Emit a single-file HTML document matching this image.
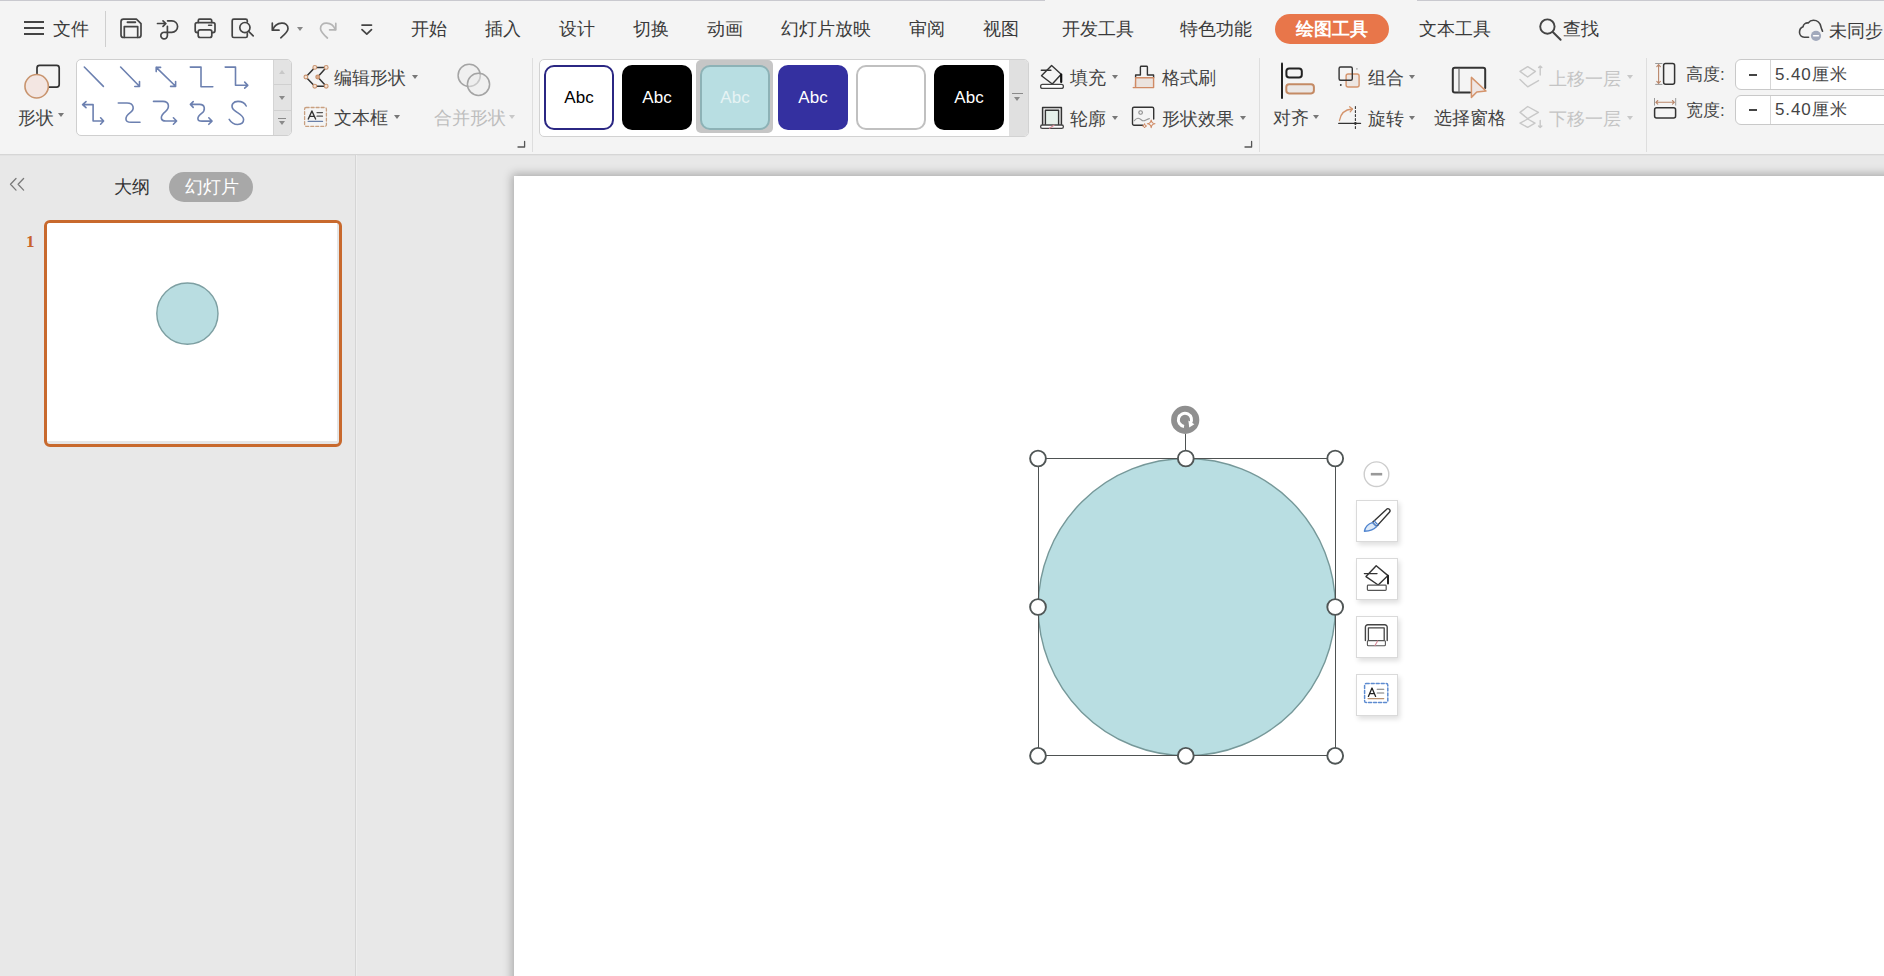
<!DOCTYPE html>
<html><head><meta charset="utf-8">
<style>
*{margin:0;padding:0;box-sizing:border-box}
html,body{width:1884px;height:976px;overflow:hidden;background:#e8e8e8;font-family:"Liberation Sans",sans-serif;color:#333}
.a{position:absolute}
.t{position:absolute;font-size:18px;line-height:20px;white-space:nowrap;color:#3a3a3a}
.dd{position:absolute;width:0;height:0;border-left:3.5px solid transparent;border-right:3.5px solid transparent;border-top:4px solid #777}
svg{position:absolute;overflow:visible}
#ribbon .t{color:#444}
.fb{position:absolute;left:1356px;width:41.5px;height:41.5px;background:#fff;border:1px solid #dadada;box-shadow:2px 3px 5px rgba(0,0,0,0.13)}
.sw{position:absolute;top:65px;width:70px;height:65px;border-radius:10px;font-size:17px;line-height:66px;text-align:center;font-family:"Liberation Sans",sans-serif}
.sw[style*="border"]{line-height:62px}
</style></head><body>
<!-- top bar -->
<div class="a" style="left:0;top:0;width:1884px;height:155px;background:#f4f4f4"></div>
<div class="a" style="left:0;top:0;width:1045px;height:1px;background:#c9c9cf"></div>
<div class="a" style="left:1417px;top:0;width:467px;height:1px;background:#c9c9cf"></div>
<div class="a" style="left:0;top:154px;width:1884px;height:1px;background:#d6d6d6"></div>
<div class="a" style="left:0;top:155px;width:1884px;height:1px;background:#e2e2e2"></div>

<!-- TABS -->
<div id="tabs">
<div class="a" style="left:24px;top:21px;width:20px;height:2px;background:#444"></div>
<div class="a" style="left:24px;top:27px;width:20px;height:2px;background:#444"></div>
<div class="a" style="left:24px;top:33px;width:20px;height:2px;background:#444"></div>
<span class="t" style="left:53px;top:19px">文件</span>
<div class="a" style="left:105px;top:11px;width:1px;height:36px;background:#cfcfcf"></div>
<span class="t" style="left:411px;top:19px">开始</span>
<span class="t" style="left:485px;top:19px">插入</span>
<span class="t" style="left:559px;top:19px">设计</span>
<span class="t" style="left:633px;top:19px">切换</span>
<span class="t" style="left:707px;top:19px">动画</span>
<span class="t" style="left:781px;top:19px">幻灯片放映</span>
<span class="t" style="left:909px;top:19px">审阅</span>
<span class="t" style="left:983px;top:19px">视图</span>
<span class="t" style="left:1062px;top:19px">开发工具</span>
<span class="t" style="left:1180px;top:19px">特色功能</span>
<div class="a" style="left:1275px;top:14px;width:114px;height:30px;border-radius:15px;background:#e8764a"></div>
<span class="t" style="left:1296px;top:19px;color:#fff;font-weight:bold">绘图工具</span>
<span class="t" style="left:1419px;top:19px">文本工具</span>
<span class="t" style="left:1563px;top:19px">查找</span>
<span class="t" style="left:1829px;top:21px">未同步</span>
<svg width="1884" height="60" style="left:0;top:0" fill="none" stroke="#444" stroke-width="1.7" stroke-linecap="round" stroke-linejoin="round">
 <!-- save -->
 <path d="M123.5 19.2 H136.4 L141 23.6 V35 A2.5 2.5 0 0 1 138.5 37.5 H123.5 A2.5 2.5 0 0 1 121 35 V21.7 A2.5 2.5 0 0 1 123.5 19.2 Z"/>
 <path d="M124.3 37.3 V26.6 H137.7 V37.3"/>
 <path d="M127.5 22.3 H135.3" stroke-width="1.9"/>
 <!-- share/loop -->
 <path d="M157.5 23.5 H165.5 M163 20.8 L165.9 23.5 L163 26.3"/>
 <path d="M167.6 20.8 H171.8 A5.8 5.8 0 0 1 171.8 32.4 H165 A3.3 3.3 0 1 0 167.4 35.6 V26.3"/>
 <!-- print -->
 <path d="M198.3 22.5 V20.5 A1.3 1.3 0 0 1 199.6 19.2 H210.4 A1.3 1.3 0 0 1 211.7 20.5 V22.5"/>
 <path d="M198 32.6 H197.2 A2 2 0 0 1 195.2 30.6 V24.6 A2 2 0 0 1 197.2 22.6 H213 A2 2 0 0 1 215 24.6 V30.6 A2 2 0 0 1 213 32.6 H212"/>
 <path d="M200.2 29.8 H209.8 A2 2 0 0 1 211.8 31.8 V35.5 A2 2 0 0 1 209.8 37.5 H200.2 A2 2 0 0 1 198.2 35.5 V31.8 A2 2 0 0 1 200.2 29.8 Z"/>
 <path d="M208.6 25.3 H211.6" stroke-width="1.6"/>
 <!-- preview -->
 <path d="M247.3 22 V20.8 A1.6 1.6 0 0 0 245.7 19.2 H233.8 A1.6 1.6 0 0 0 232.2 20.8 V35.9 A1.6 1.6 0 0 0 233.8 37.5 H245.7 A1.6 1.6 0 0 0 247.3 35.9 V33.4"/>
 <circle cx="244.9" cy="27.6" r="5.1"/>
 <path d="M248.6 31.4 L253.2 35.8"/>
 <!-- undo -->
 <path d="M272.3 23.2 V30.2 H279"/>
 <path d="M272.8 29.6 C276 21.6 288.2 20.8 288 28.8 C287.9 31.5 286 33.5 280.8 37.8"/>
 <!-- redo -->
 <path d="M335.8 23.4 V29.8 H329.6" stroke="#b5b5b5"/>
 <path d="M335.2 29.4 C332 21.6 320.4 20.8 320.5 28.8 C320.6 31.5 322.3 33.5 327.4 38" stroke="#b5b5b5"/>
 <!-- customize -->
 <path d="M362 25.1 H371.5 M362 29.6 L366.8 34.2 L371.5 29.6"/>
 <!-- search -->
 <circle cx="1547.4" cy="26.6" r="7.2" stroke-width="1.9"/>
 <path d="M1552.8 32 L1560.6 39.8" stroke-width="2"/>
 <!-- cloud -->
 <path d="M1808.6 37.2 H1804.2 C1801.4 37.2 1799.5 35 1799.5 32.3 C1799.5 29.6 1801 27.6 1803 26.8 C1803.4 24.4 1805.6 22.6 1808.2 22.9 C1809.5 21.2 1811.3 20.3 1813.4 20.3 C1817.4 20.3 1820.2 23.2 1820.9 26.6 C1821.3 28.4 1822 29.8 1822.5 31.2" stroke-width="1.6"/>
 <circle cx="1816" cy="35.8" r="5.1" fill="#a1a9bc" stroke="none"/>
 <path d="M1813.6 35.8 H1818.4" stroke="#fff" stroke-width="1.6"/>
</svg>
<div class="dd" style="left:297px;top:27px;border-top-color:#888"></div>
</div>


<!-- RIBBON -->
<div id="ribbon">
<!-- shape button -->
<span class="t" style="left:18px;top:108px">形状</span>
<div class="dd" style="left:58px;top:113px"></div>
<!-- line gallery -->
<div class="a" style="left:76px;top:59px;width:216px;height:77px;background:#fff;border:1px solid #cfcfcf;border-radius:5px"></div>
<div class="a" style="left:273px;top:60px;width:18px;height:75px;background:#e3e3e3;border-left:1px solid #d4d4d4;border-radius:0 4px 4px 0"></div>
<div class="a" style="left:274px;top:84px;width:17px;height:1px;background:#d0d0d0"></div>
<div class="a" style="left:274px;top:110px;width:17px;height:1px;background:#d0d0d0"></div>
<div class="dd" style="left:279px;top:70px;border-top:none;border-bottom:4px solid #c8c8c8"></div>
<div class="dd" style="left:279px;top:96px;border-top-color:#8a8a8a"></div>
<div class="a" style="left:278px;top:118px;width:8px;height:1px;background:#8a8a8a"></div>
<div class="dd" style="left:279px;top:121px;border-top-color:#8a8a8a"></div>
<!-- edit shape / textbox -->
<span class="t" style="left:334px;top:68px">编辑形状</span>
<div class="dd" style="left:412px;top:75px"></div>
<span class="t" style="left:334px;top:108px">文本框</span>
<div class="dd" style="left:394px;top:115px"></div>
<span class="t" style="left:434px;top:108px;color:#bdbdbd">合并形状</span>
<div class="dd" style="left:509px;top:115px;border-top-color:#c8c8c8"></div>
<div class="a" style="left:532px;top:58px;width:1px;height:94px;background:#dedede"></div>
<!-- style gallery -->
<div class="a" style="left:539px;top:59px;width:490px;height:78px;background:#fff;border:1px solid #d2d2d2;border-radius:5px"></div>
<div class="a" style="left:1009px;top:60px;width:19px;height:76px;background:#e0e0e0;border-radius:0 4px 4px 0"></div>
<div class="a" style="left:1012px;top:93px;width:11px;height:1px;background:#8a8a8a"></div>
<div class="dd" style="left:1014px;top:97px;border-top-color:#8a8a8a"></div>
<div class="a" style="left:696px;top:60px;width:77px;height:73px;background:#c6c6c6;border-radius:5px"></div>
<div class="sw" style="left:544px;background:#fff;border:2px solid #2b2783;color:#000">Abc</div>
<div class="sw" style="left:622px;background:#000;color:#fff">Abc</div>
<div class="sw" style="left:700px;background:#b8dee2;border:2px solid #8db2b6;color:#e6f3f4">Abc</div>
<div class="sw" style="left:778px;background:#3430a0;color:#fff">Abc</div>
<div class="sw" style="left:856px;background:#fff;border:2px solid #c0c0c0"></div>
<div class="sw" style="left:934px;background:#000;color:#fff">Abc</div>
<!-- fill etc -->
<span class="t" style="left:1070px;top:68px">填充</span>
<div class="dd" style="left:1112px;top:75px"></div>
<span class="t" style="left:1162px;top:68px">格式刷</span>
<span class="t" style="left:1070px;top:109px">轮廓</span>
<div class="dd" style="left:1112px;top:116px"></div>
<span class="t" style="left:1162px;top:109px">形状效果</span>
<div class="dd" style="left:1240px;top:116px"></div>
<div class="a" style="left:1259px;top:58px;width:1px;height:94px;background:#dedede"></div>
<!-- arrange -->
<span class="t" style="left:1273px;top:108px">对齐</span>
<div class="dd" style="left:1313px;top:115px"></div>
<span class="t" style="left:1368px;top:68px">组合</span>
<div class="dd" style="left:1409px;top:75px"></div>
<span class="t" style="left:1368px;top:109px">旋转</span>
<div class="dd" style="left:1409px;top:116px"></div>
<span class="t" style="left:1434px;top:108px">选择窗格</span>
<span class="t" style="left:1549px;top:69px;color:#c4c4c4">上移一层</span>
<div class="dd" style="left:1627px;top:75px;border-top-color:#c8c8c8"></div>
<span class="t" style="left:1549px;top:109px;color:#c4c4c4">下移一层</span>
<div class="dd" style="left:1627px;top:116px;border-top-color:#c8c8c8"></div>
<div class="a" style="left:1646px;top:58px;width:1px;height:94px;background:#dedede"></div>

<svg width="1884" height="155" style="left:0;top:0" fill="none" stroke-linecap="round" stroke-linejoin="round">
 <!-- shape icon -->
 <rect x="37" y="65.3" width="22.2" height="21.9" rx="2.6" stroke="#333" stroke-width="1.7"/>
 <circle cx="36.65" cy="86.25" r="11.7" fill="#f3e6e2" stroke="#c8946e" stroke-width="1.6"/>
 <!-- line gallery -->
 <g stroke="#6c80b0" stroke-width="1.6">
  <path d="M84.3 67 L103.4 86.4"/>
  <path d="M120.6 67 L139.4 86.2 M139.5 81.6 V86.5 H134.8"/>
  <path d="M156.2 67.4 L175.6 86.3 M156.2 71.6 V67.4 H160.6 M175.6 81.6 V86.4 H170.6"/>
  <path d="M190.3 67.1 H201 V86.8 H212.8"/>
  <path d="M225.2 67.1 H235.5 V85.3 H247.6 M244.7 82.1 L247.8 85.3 L244.7 88.2"/>
  <path d="M82.6 104.6 H93.1 V121 H103.3 M86 101.6 L82.6 104.6 L86 107.6 M100.6 117.8 L103.6 121 L100.6 124.2"/>
  <path d="M118.3 103 H127 C134.2 103 134.8 109.5 130.2 112.6 C124.6 116.6 124.2 122.3 131 122.3 H140"/>
  <path d="M153.5 101.4 H163 C169.6 101.4 169.8 108.2 165.4 111.6 C160 115.8 159.8 121 166 121 H176.5 M173.4 117.8 L176.6 121 L173.4 124.2"/>
  <path d="M190.5 104.4 H199.6 C205.4 104.4 205.6 110.5 201.6 113.4 C196.6 117.2 196.6 121.1 202 121.1 H211.8 M193.2 101.6 L190.4 104.4 L193.2 107.4 M208.8 117.8 L212 121.1 L208.8 124.3"/>
  <path d="M246.2 106 C244.6 102.8 241.4 101.4 238 101.4 C233.4 101.4 230.8 104.6 232.6 108.4 C234.6 112.4 243.6 114.2 243.6 119.6 C243.6 123 240.8 124.5 237.6 124.5 C234 124.5 231 122.4 229.2 119.4"/>
 </g>
 <!-- edit shape -->
 <path d="M314.8 67.4 H326.2 L317.7 77 L326.2 86.2 H314.8 L305.9 77 Z" stroke="#333" stroke-width="1.5"/>
 <g fill="#f4e2d4" stroke="#c99470" stroke-width="1.1">
  <circle cx="314.8" cy="67.4" r="1.9"/><circle cx="326.2" cy="67.4" r="1.9"/><circle cx="317.7" cy="77" r="1.9" fill="#d9a888"/>
  <circle cx="326.2" cy="86.2" r="1.9"/><circle cx="314.8" cy="86.2" r="1.9"/><circle cx="305.9" cy="77" r="1.9"/>
 </g>
 <!-- textbox -->
 <rect x="304.6" y="107.5" width="21.8" height="18.8" rx="1.5" stroke="#c9a080" stroke-width="1.3" stroke-dasharray="3 2"/>
 <path d="M308.3 119 L311.9 111 L315.6 119 M309.6 116.4 H314.3" stroke="#333" stroke-width="1.4"/>
 <path d="M317 112.6 H322.5 M317 116.2 H322.5" stroke="#555" stroke-width="1.2"/>
 <path d="M308.2 121.4 H322.5" stroke="#6a80a8" stroke-width="1.3"/>
 <!-- merge -->
 <circle cx="469.2" cy="75.4" r="11.1" stroke="#a4a4a4" stroke-width="1.5" fill="#ececec" fill-opacity="0.5"/>
 <circle cx="478.5" cy="84.3" r="11.1" stroke="#a4a4a4" stroke-width="1.5" fill="#ececec" fill-opacity="0.5"/>
 <path d="M518 147 H524.6 V141.4" stroke="#555" stroke-width="1.3"/>
 <!-- style gallery scroll nothing -->
 <!-- fill -->
 <path d="M1051.6 65.5 L1061.2 74.2 L1052.3 84 L1041.5 75.8 Z" stroke="#333" stroke-width="1.4"/>
 <path d="M1041.3 70.3 H1050.9" stroke="#333" stroke-width="1.4"/>
 <path d="M1061.2 74.5 V82" stroke="#111" stroke-width="2.2"/>
 <rect x="1040.6" y="84.4" width="22.8" height="4" rx="2" stroke="#444" stroke-width="1.3" fill="#fff"/>
 <!-- format painter -->
 <path d="M1135.6 77.8 V75 H1140.4 V67 A0.8 0.8 0 0 1 1141.2 66.3 H1146.6 A0.8 0.8 0 0 1 1147.4 67 V75 H1153.6 V77.8" stroke="#333" stroke-width="1.4"/>
 <path d="M1135.6 77.8 H1153.6 V87.6 H1133.2 M1135.6 77.8 V87.6" stroke="#d08a64" stroke-width="1.4" fill="#ebe3de"/>
 <!-- outline -->
 <path d="M1042.6 125 V107.4 H1061.4 V125" stroke="#333" stroke-width="1.5"/>
 <path d="M1045.4 125 V110.3 H1058.6 V125" stroke="#333" stroke-width="1.4" fill="#e6f0ea"/>
 <rect x="1040.6" y="125" width="22.8" height="3.4" rx="1.7" stroke="#444" stroke-width="1.3" fill="#fff"/>
 <path d="M1049.5 128.2 L1054 125.2" stroke="#d88a98" stroke-width="1.2"/>
 <!-- shape effect -->
 <path d="M1143 125.3 H1134 A1.5 1.5 0 0 1 1132.5 123.8 V108.7 A1.5 1.5 0 0 1 1134 107.2 H1152.2 A1.5 1.5 0 0 1 1153.7 108.7 V119" stroke="#333" stroke-width="1.4"/>
 <circle cx="1140.6" cy="112.5" r="1.8" stroke="#888" stroke-width="1.1"/>
 <path d="M1134.3 120.6 C1137 117.5 1139 117.5 1141.5 120 C1144 122.5 1146 119 1149.4 118.6" stroke="#999" stroke-width="1.1"/>
 <path d="M1151.2 120 Q1151.6 123.4 1155 123.8 Q1151.6 124.2 1151.2 127.6 Q1150.8 124.2 1147.4 123.8 Q1150.8 123.4 1151.2 120 Z" stroke="#d08a64" stroke-width="1.1"/>
 <path d="M1144.6 124 Q1144.8 125.8 1146.6 126 Q1144.8 126.2 1144.6 128 Q1144.4 126.2 1142.6 126 Q1144.4 125.8 1144.6 124 Z" stroke="#d08a64" stroke-width="1"/>
 <path d="M1245 147 H1251.6 V141.4" stroke="#555" stroke-width="1.3"/>
 <!-- align -->
 <path d="M1282 63.6 V98" stroke="#222" stroke-width="2"/>
 <rect x="1286.4" y="68.4" width="15.4" height="9.2" rx="2.8" stroke="#222" stroke-width="2"/>
 <rect x="1286.3" y="84.2" width="27.6" height="9.2" rx="2.8" stroke="#c48a64" stroke-width="2" fill="#ebe7e5"/>
 <!-- group -->
 <rect x="1346.1" y="74" width="13" height="13" rx="2" stroke="#d4946c" stroke-width="1.4" fill="#ede6e2"/>
 <rect x="1339.1" y="67" width="13.2" height="13.2" rx="1.5" stroke="#333" stroke-width="1.4"/>
 <circle cx="1340.8" cy="85" r="0.9" fill="#333" stroke="none"/>
 <circle cx="1356.9" cy="68.8" r="0.9" fill="#aaa" stroke="none"/>
 <!-- rotate -->
 <path d="M1339.5 120.5 C1340.5 113.5 1345 109.6 1352.2 109" stroke="#d4946c" stroke-width="1.3"/>
 <path d="M1349.6 106.8 L1352.4 109 L1350.2 111.8" stroke="#d4946c" stroke-width="1.3"/>
 <path d="M1355.4 106.5 V128.6" stroke="#333" stroke-width="1.1" stroke-dasharray="2 2"/>
 <path d="M1338.8 123.4 H1360.5" stroke="#333" stroke-width="1.4"/>
 <circle cx="1355.4" cy="123.4" r="1.3" fill="#333" stroke="none"/>
 <!-- selection pane -->
 <path d="M1470 92.4 H1454.8 A2 2 0 0 1 1452.8 90.4 V69.8 A2 2 0 0 1 1454.8 67.8 H1483.2 A2 2 0 0 1 1485.2 69.8 V88" stroke="#333" stroke-width="2"/>
 <path d="M1459 68.5 V92" stroke="#666" stroke-width="1.2"/>
 <path d="M1471.4 77.4 V97.4 L1476.8 92 L1486 91 Z" stroke="#d4946c" stroke-width="1.5" fill="#efe6e4"/>
 <!-- bring forward / send backward -->
 <g stroke="#c8c8c8" stroke-width="1.4">
  <path d="M1520 71.4 L1527.7 66.6 L1535.4 71.4 L1527.7 77 Z"/>
  <path d="M1520 79.6 L1527.7 86.8 L1538.5 80.6"/>
  <path d="M1540.2 66 V75 M1538.6 67.6 L1540.2 66 L1541.8 67.6"/>
  <path d="M1520 112.4 L1527.7 106.5 L1538.4 112.4 L1527.7 118.6 Z"/>
  <path d="M1520 123.2 L1527.7 119 L1535 123.2 L1527.7 127.4 Z"/>
  <path d="M1540.2 120.5 V127.6 M1538.6 126 L1540.2 127.6 L1541.8 126"/>
 </g>
 <!-- height / width -->
 <rect x="1663.6" y="63.6" width="11" height="20.6" rx="2" stroke="#333" stroke-width="1.5"/>
 <path d="M1655.6 63.5 H1662 M1655.6 84.4 H1662" stroke="#999" stroke-width="1"/>
 <path d="M1658.6 64.6 V83.4 M1656.8 66.6 L1658.6 64.6 L1660.4 66.6 M1656.8 81.4 L1658.6 83.4 L1660.4 81.4" stroke="#b9866a" stroke-width="1.1"/>
 <rect x="1654.6" y="107.8" width="21" height="10.2" rx="2" stroke="#333" stroke-width="1.5"/>
 <path d="M1654.5 98.4 V105.2 M1675.7 98.4 V105.2" stroke="#999" stroke-width="1"/>
 <path d="M1655.8 102.3 H1674.4 M1657.8 100.5 L1655.8 102.3 L1657.8 104.1 M1672.4 100.5 L1674.4 102.3 L1672.4 104.1" stroke="#b9866a" stroke-width="1.1"/>
</svg>

<!-- size -->
<span class="t" style="left:1686px;top:65px;font-size:17px">高度:</span>
<span class="t" style="left:1686px;top:101px;font-size:17px">宽度:</span>
<div class="a" style="left:1735px;top:59px;width:160px;height:31px;background:#fff;border:1px solid #c9c9c9;border-radius:6px"></div>
<div class="a" style="left:1770px;top:60px;width:1px;height:29px;background:#d6d6d6"></div>
<div class="a" style="left:1735px;top:95px;width:160px;height:30px;background:#fff;border:1px solid #c9c9c9;border-radius:6px"></div>
<div class="a" style="left:1770px;top:96px;width:1px;height:28px;background:#d6d6d6"></div>
<div class="a" style="left:1749px;top:74px;width:8px;height:1.5px;background:#444"></div>
<div class="a" style="left:1749px;top:109px;width:8px;height:1.5px;background:#444"></div>
<span class="t" style="left:1775px;top:65px;font-size:17px;letter-spacing:0.9px">5.40厘米</span>
<span class="t" style="left:1775px;top:100px;font-size:17px;letter-spacing:0.9px">5.40厘米</span>
</div>

<!-- left panel separator -->
<div class="a" style="left:355px;top:155px;width:1px;height:821px;background:#d5d5d5"></div>
<div class="a" style="left:356px;top:155px;width:1px;height:821px;background:#eeeeee"></div>

<!-- slide -->
<div class="a" style="left:514px;top:176px;width:1400px;height:900px;background:#fff;box-shadow:-2px -2px 9px rgba(0,0,0,0.28)"></div>


<!-- LEFT PANEL -->
<svg width="30" height="20" style="left:0;top:170px" fill="none" stroke="#7a7a7a" stroke-width="1.3" stroke-linecap="round" stroke-linejoin="round">
 <path d="M16 9 L10.5 14.8 L16 20.6 M23.6 9 L18.1 14.8 L23.6 20.6" transform="translate(0,-0.5)"/>
</svg>
<span class="t" style="left:114px;top:177px;color:#333">大纲</span>
<div class="a" style="left:169px;top:172px;width:84px;height:30px;border-radius:15px;background:#a8a8a8"></div>
<span class="t" style="left:185px;top:177px;color:#fff">幻灯片</span>
<span class="a" style="left:26px;top:232px;font-family:'Liberation Serif',serif;font-size:17px;font-weight:bold;line-height:20px;color:#c8642a">1</span>
<div class="a" style="left:44px;top:220px;width:298px;height:227px;border:3px solid #c8692d;border-radius:6px;background:#e6e6e6"></div>
<div class="a" style="left:47px;top:223px;width:289.5px;height:218px;background:#fff;border-radius:3px 0 0 0"></div>
<svg width="1" height="1" style="left:0;top:0">
 <circle cx="187.4" cy="313.6" r="30.6" fill="#b9dde1" stroke="#7d9fa2" stroke-width="1.4"/>
</svg>

<!-- SELECTED SHAPE -->
<svg width="1" height="1" style="left:0;top:0" fill="none">
 <circle cx="1186.8" cy="607.1" r="148.6" fill="#b9dee2" stroke="#769899" stroke-width="1.4"/>
 <rect x="1038.5" y="458.5" width="297" height="297" stroke="#4e5252" stroke-width="1"/>
 <path d="M1185.5 434 V450.5" stroke="#4e5252" stroke-width="1"/>
 <g fill="#fff" stroke="#505656" stroke-width="1.9">
  <circle cx="1038" cy="458.5" r="7.9"/><circle cx="1185.8" cy="458.5" r="7.9"/><circle cx="1335.2" cy="458.5" r="7.9"/>
  <circle cx="1038" cy="607" r="7.9"/><circle cx="1335.2" cy="607" r="7.9"/>
  <circle cx="1038" cy="755.8" r="7.9"/><circle cx="1185.8" cy="755.8" r="7.9"/><circle cx="1335.2" cy="755.8" r="7.9"/>
 </g>
 <circle cx="1185.2" cy="419.9" r="14.1" fill="#8f8f8f"/>
 <path d="M1184.05 426.4 A6.6 6.6 0 1 1 1190.4 423.6" stroke="#fff" stroke-width="3" stroke-linecap="butt"/>
 <path d="M1194.4 424.2 L1188.4 420.6 L1189.2 427.4 Z" fill="#fff"/>
 <!-- float toolbar -->
 <circle cx="1376.5" cy="474.2" r="12.3" fill="#fff" stroke="#cdcdcd" stroke-width="1.4"/>
 <path d="M1370.8 474.2 H1382.2" stroke="#999" stroke-width="2.6"/>
</svg>
<div class="fb" style="top:500px"></div>
<div class="fb" style="top:558px"></div>
<div class="fb" style="top:616px"></div>
<div class="fb" style="top:674px"></div>
<svg width="1" height="1" style="left:0;top:0" fill="none" stroke-linecap="round" stroke-linejoin="round">
 <!-- brush -->
 <path d="M1372.4 522.6 L1386.4 509.4 A2 2 0 0 1 1389.4 512.2 L1376.4 526.6 Z" stroke="#333" stroke-width="1.4" fill="#fff"/>
 <path d="M1372.4 522.6 C1368.5 523.4 1365 527 1364.4 531.2 C1369 531 1374 529.6 1376.4 526.6 Z" stroke="#4f84cf" stroke-width="1.4" fill="#dce9f8"/>
 <path d="M1374.2 521 L1378.2 525.2" stroke="#4f84cf" stroke-width="1.3"/>
 <!-- fill -->
 <path d="M1376.2 565.8 L1388 575.6 L1378.2 585 L1366 576.6 Z" stroke="#333" stroke-width="1.4"/>
 <path d="M1364.4 573.6 H1377" stroke="#333" stroke-width="1.4"/>
 <path d="M1388 575.8 V583.6" stroke="#222" stroke-width="2"/>
 <rect x="1367.4" y="585.2" width="18.8" height="5.2" rx="0.8" stroke="#555" stroke-width="1.2" fill="#fff"/>
 <!-- outline -->
 <path d="M1365.4 640.6 V627.2 A2.4 2.4 0 0 1 1367.8 624.8 H1384.8 A2.4 2.4 0 0 1 1387.2 627.2 V640.6" stroke="#444" stroke-width="1.4"/>
 <path d="M1368.4 640.6 V627.8 H1384.2 V640.6" stroke="#444" stroke-width="1.3"/>
 <rect x="1367.4" y="640.6" width="18" height="5.2" rx="1" stroke="#555" stroke-width="1.1" fill="#fff"/>
 <path d="M1375 645.6 L1377.6 641" stroke="#d88a98" stroke-width="1.1"/>
 <!-- textbox -->
 <rect x="1364.6" y="683.6" width="23.2" height="19" rx="1.6" stroke="#5d8bd0" stroke-width="1.5" stroke-dasharray="3 2"/>
 <path d="M1368.4 696.4 L1372 688 L1375.6 696.4 M1369.6 693.6 H1374.4" stroke="#222" stroke-width="1.3"/>
 <path d="M1377.2 689.2 H1383.8 M1377.2 693 H1383.8" stroke="#777" stroke-width="1.1"/>
 <path d="M1368 698.6 H1383.8" stroke="#b89070" stroke-width="1.1"/>
</svg>

</body></html>
